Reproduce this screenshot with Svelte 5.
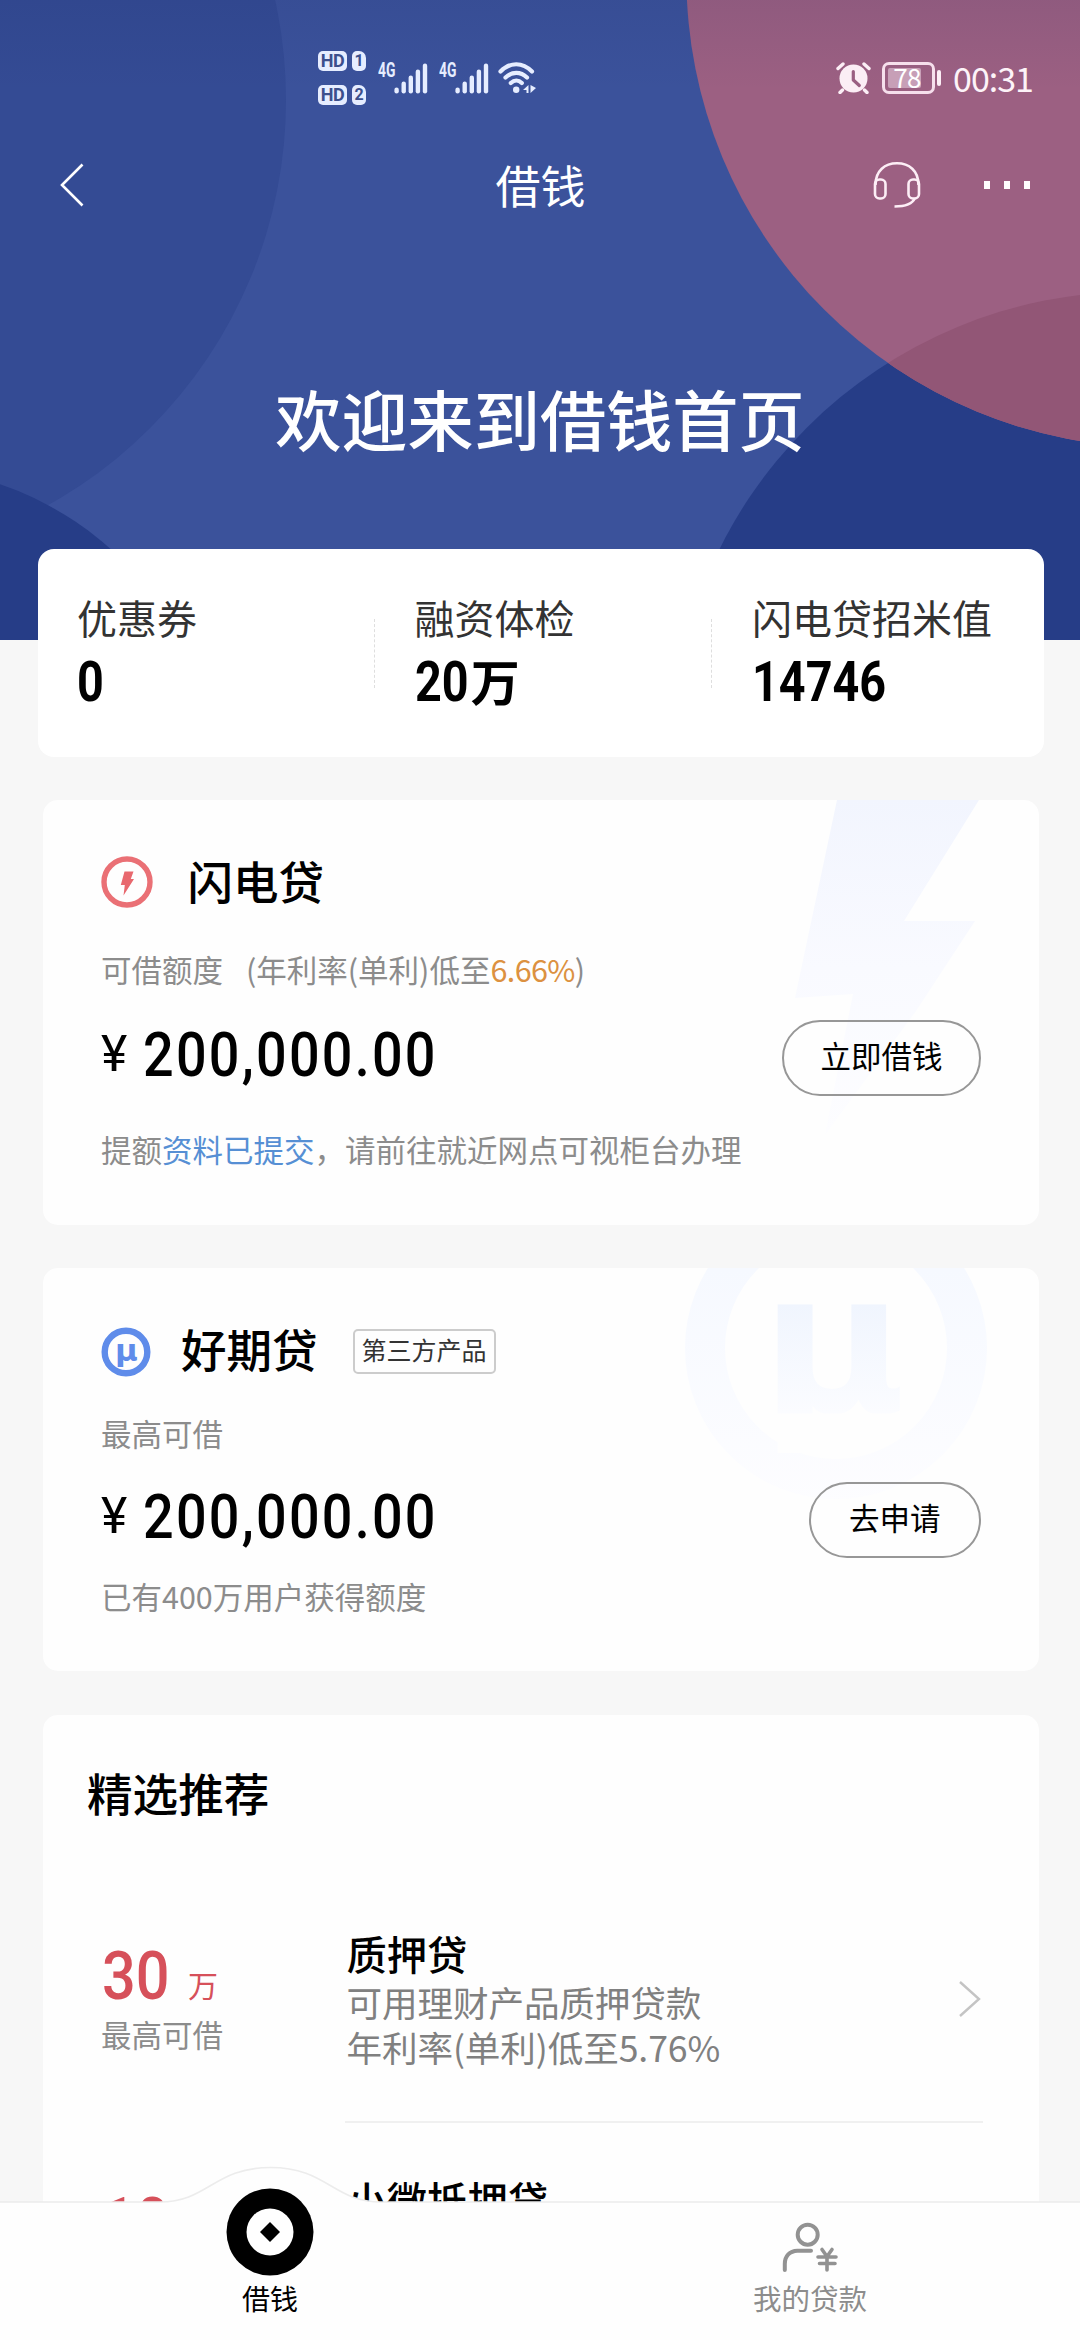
<script lang="ts">
	const stats = [
		{ label: '优惠券', num: '0', unit: '' },
		{ label: '融资体检', num: '20', unit: '万' },
		{ label: '闪电贷招米值', num: '14746', unit: '' }
	];

	const picks = [
		{ amount: '30', name: '质押贷', desc: '可用理财产品质押贷款', rate: '年利率(单利)低至5.76%' },
		{ amount: '10', name: '小微抵押贷', desc: '', rate: '' }
	];

	const bars = [6, 12, 18, 24, 30];
</script>

<div class="page">
	<header class="hero">
		<svg class="hero-bg" viewBox="0 0 1080 640">
			<defs>
				<linearGradient id="shade" x1="0" y1="0" x2="0" y2="1">
					<stop offset="0" stop-color="#12205a" stop-opacity="0.09" />
					<stop offset="1" stop-color="#12205a" stop-opacity="0" />
				</linearGradient>
				<clipPath id="pink"><circle cx="1156.6" cy="-22.9" r="470.2" /></clipPath>
			</defs>
			<rect width="1080" height="640" fill="#3b529b" />
			<circle cx="-178" cy="100" r="464" fill="#344b94" />
			<circle cx="-108" cy="796" r="330" fill="#263d87" />
			<circle cx="1135.3" cy="756.2" r="464.6" fill="#263d87" />
			<circle cx="1156.6" cy="-22.9" r="470.2" fill="#9c6082" />
			<circle cx="1135.3" cy="756.2" r="464.6" fill="#925676" clip-path="url(#pink)" />
			<rect width="1080" height="90" fill="url(#shade)" />
		</svg>

		<div class="status">
			<div class="status-left">
				<div class="sims">
					{#each [1, 2] as n}
						<div class="sim"><span class="hd">HD</span><span class="slot">{n}</span></div>
					{/each}
				</div>
				{#each [1, 2] as n}
					<div class="signal">
						<span class="net">4G</span>
						<svg width="34" height="31" viewBox="0 0 34 31">
							{#each bars as h, i}
								<rect x={i * 7.1 + 0.4} y={30.5 - h} width="4.4" height={h} rx="2.2" fill="#e6edff" />
							{/each}
						</svg>
					</div>
				{/each}
				<svg class="wifi" width="40" height="32" viewBox="0 0 40 32" fill="none" stroke="#e6edff" stroke-width="4.2" stroke-linecap="round">
					<path d="M2.5 9.5C12 -0.2 24.5 -0.2 34 9.5M7.5 15.5c6.5-6.2 15-6.2 21.5 0M12.8 21c3.5-3.3 7.7-3.3 11 0" />
					<circle cx="18.2" cy="27.8" r="3.2" fill="#e6edff" stroke="none" />
					<path d="M30.5 23v8h-2v-3h-3.5zM32.5 23l5.5 3-5.5 5z" fill="#e6edff" stroke="none" />
				</svg>
			</div>
			<div class="status-right">
				<svg width="35" height="32" viewBox="0 0 35 32">
					<circle cx="17.5" cy="16.5" r="14" fill="#fbeef5" />
					<path d="M6.5 28l-2.5 2.5M28.5 28l2.5 2.5M2 6.5l5-4.5M33 6.5l-5-4.5" stroke="#fbeef5" stroke-width="3.4" stroke-linecap="round" />
					<path d="M17.3 9.5v8.5l6 5.5" stroke="#9a5f82" stroke-width="3.2" fill="none" stroke-linecap="round" stroke-linejoin="round" />
				</svg>
				<div class="battery"><span class="charge"></span><span class="level">78</span></div>
				<span class="time">00:31</span>
			</div>
		</div>

		<nav class="nav">
			<svg class="back" width="24" height="44" viewBox="0 0 24 44" fill="none" stroke="#fff" stroke-width="2.6">
				<path d="M22.5 1.5L2 22l20.5 20.5" />
			</svg>
			<h1>借钱</h1>
			<div class="nav-right">
				<svg width="48" height="48" viewBox="0 0 48 48" fill="none" stroke="#fdeef6" stroke-width="2.6">
					<path d="M2.5 24C2.5 9.5 12 2.3 24 2.3S45.5 9.5 45.5 24" />
					<rect x="2" y="18.5" width="10.5" height="19" rx="4.5" />
					<rect x="35.5" y="18.5" width="10.5" height="19" rx="4.5" />
					<path d="M42 37c-2.5 5.5-8 8.5-20.5 8.5" />
				</svg>
				<div class="dots"><i></i><i></i><i></i></div>
			</div>
		</nav>

		<h2 class="welcome">欢迎来到借钱首页</h2>
	</header>

	<section class="stats">
		{#each stats as s}
			<div class="stat">
				<span class="stat-label">{s.label}</span>
				<span class="stat-value"><b class="din">{s.num}</b>{#if s.unit}<em>{s.unit}</em>{/if}</span>
			</div>
		{/each}
	</section>

	<section class="card flash">
		<svg class="mark" width="220" height="345" viewBox="0 0 220 345">
			<defs>
				<linearGradient id="bolt" x1="0" y1="0" x2="0" y2="1">
					<stop offset="0" stop-color="#f2f5fe" />
					<stop offset="0.5" stop-color="#f9faff" />
					<stop offset="1" stop-color="#fdfdff" />
				</linearGradient>
			</defs>
			<path d="M57 0H199L124 121H195L136 211L45 335L73 194L15 198Z" fill="url(#bolt)" />
		</svg>
		<div class="card-head">
			<svg class="logo" width="52" height="52" viewBox="0 0 52 52">
				<circle cx="26" cy="26" r="23" fill="none" stroke="#ea7075" stroke-width="5.4" />
				<path d="M23.5 15.5h9l-2.7 7.5h3.2L22.5 39.5l1.3-10.5h-4z" fill="#e8686e" />
			</svg>
			<h3>闪电贷</h3>
		</div>
		<p class="sub">可借额度<span class="gap"></span>(年利率(单利)低至<span class="orange">6.66%</span>)</p>
		<div class="amount-row">
			<span class="yen">¥</span><span class="din amount">200,000.00</span>
			<button>立即借钱</button>
		</div>
		<p class="note">提额<span class="blue">资料已提交</span>，请前往就近网点可视柜台办理</p>
	</section>

	<section class="card hao">
		<svg class="mark" width="310" height="240" viewBox="0 0 310 240">
			<defs>
				<linearGradient id="ring" x1="0" y1="0" x2="0" y2="240" gradientUnits="userSpaceOnUse">
					<stop offset="0" stop-color="#f6f9ff" />
					<stop offset="1" stop-color="#fdfdff" />
				</linearGradient>
				<linearGradient id="letter" x1="0" y1="36" x2="0" y2="146" gradientUnits="userSpaceOnUse">
					<stop offset="0" stop-color="#f0f5fe" />
					<stop offset="0.99" stop-color="#fbfcff" />
					<stop offset="1" stop-color="#fefefe" />
				</linearGradient>
			</defs>
			<circle cx="155" cy="80" r="131" fill="none" stroke="url(#ring)" stroke-width="40" />
			<text class="mu" x="80" y="144" font-size="197" fill="url(#letter)">µ</text>
		</svg>
		<div class="card-head">
			<svg class="logo" width="50" height="50" viewBox="0 0 50 50">
				<circle cx="25" cy="25" r="21.3" fill="none" stroke="#5f8cea" stroke-width="6.4" />
				<text class="mu" x="25.5" y="33.5" font-size="31" text-anchor="middle" fill="#5f8cea">µ</text>
			</svg>
			<h3>好期贷</h3>
			<span class="tag">第三方产品</span>
		</div>
		<p class="sub">最高可借</p>
		<div class="amount-row">
			<span class="yen">¥</span><span class="din amount">200,000.00</span>
			<button>去申请</button>
		</div>
		<p class="note">已有400万用户获得额度</p>
	</section>

	<section class="card picks">
		<h3>精选推荐</h3>
		{#each picks as p}
			<div class="pick">
				<div class="pick-left">
					<div class="pick-amount"><span class="din">{p.amount}</span>{#if p.rate}<small>万</small>{/if}</div>
					{#if p.rate}<span class="pick-cap">最高可借</span>{/if}
				</div>
				<div class="pick-body">
					<div class="pick-text">
						<h4>{p.name}</h4>
						<p>{p.desc}</p>
						<p>{p.rate}</p>
					</div>
					<svg width="24" height="38" viewBox="0 0 24 38" fill="none" stroke="#c4c4c4" stroke-width="2.4">
						<path d="M2 2l19 17L2 36" />
					</svg>
				</div>
			</div>
		{/each}
	</section>

	<footer class="tabbar">
		<svg class="tab-bg" width="1080" height="176" viewBox="0 0 1080 176">
			<path d="M0 38H160C208 38 214 3.5 270.5 3.5S333 38 381 38H1080V176H0Z" fill="#fefefe" />
			<path d="M0 38H160C208 38 214 3.5 270.5 3.5S333 38 381 38H1080" fill="none" stroke="#ececec" stroke-width="1.6" />
		</svg>
		<div class="tab active">
			<svg width="88" height="88" viewBox="0 0 88 88">
				<circle cx="44" cy="44" r="43.5" fill="#000" />
				<circle cx="44" cy="44" r="23.5" fill="#fff" />
				<path d="M44 34l10 10-10 10-10-10z" fill="#000" />
			</svg>
			<span>借钱</span>
		</div>
		<div class="tab">
			<svg width="56" height="50" viewBox="0 0 56 50" fill="none" stroke="#929292" stroke-width="4" stroke-linecap="round">
				<circle cx="25.7" cy="12.7" r="10" />
				<path d="M2.8 48v-6c0-8 5-13 12.5-13.3H29" />
				<path d="M40 27.5l5 7 5-7M45 34.5V48M36 35h18M37.5 41.5h15.5" stroke-width="3.6" />
			</svg>
			<span>我的贷款</span>
		</div>
	</footer>
</div>

<style>
	:global(body) { margin: 0; background: #f7f7f7; }
	h1, h2, h3, h4, p { margin: 0; font-weight: 400; }
	svg { display: block; flex: none; }

	.page {
		position: relative; width: 1080px; height: 2340px; overflow: hidden;
		background: #f7f7f7; color: #000;
		font-family: 'Noto Sans CJK SC', sans-serif;
	}
	.din { font-family: Roboto, sans-serif; font-weight: 500; display: inline-block; transform-origin: 0 50%; }
	.mu { font-family: 'DejaVu Sans', sans-serif; font-weight: 700; }

	/* Hero */
	.hero { position: relative; height: 640px; color: #fff; }
	.hero-bg { position: absolute; inset: 0; width: 1080px; height: 640px; }
	.hero > :not(.hero-bg) { position: relative; }

	.status { display: flex; justify-content: space-between; align-items: center; height: 156px; padding: 0 47px 0 318px; box-sizing: border-box; }
	.status-left, .status-right { display: flex; align-items: center; }
	.sims { display: flex; flex-direction: column; gap: 14px; margin-right: 12px; }
	.sim { display: flex; gap: 5px; }
	.hd, .slot {
		height: 20px; line-height: 20px; border-radius: 5px; text-align: center;
		background: #e6edff; color: #3c4f8c; font-family: Roboto, sans-serif; font-weight: 700; font-size: 18px;
	}
	.hd { width: 29px; letter-spacing: -0.5px; }
	.slot { width: 14px; border-top-right-radius: 7px; font-size: 16px; }
	.signal { display: flex; align-items: flex-start; width: 61px; }
	.net { width: 16px; margin-top: -3px; font: 700 21px/21px Roboto, sans-serif; color: #e6edff; transform: scaleX(0.66); transform-origin: 0 50%; }
	.wifi { margin-left: -2px; }

	.battery {
		position: relative; display: flex; align-items: center; justify-content: center;
		width: 53px; height: 32px; margin: 0 18px 0 11px; box-sizing: border-box;
		border: 3px solid #f6dfec; border-radius: 7px;
	}
	.battery::after { content: ''; position: absolute; right: -9px; top: 5px; width: 4px; height: 16px; border-radius: 2px; background: #fdeef6; }
	.charge { position: absolute; left: 3px; top: 3px; bottom: 3px; width: 33px; background: #c79fb7; border-radius: 2px; }
	.level { position: relative; font-size: 26px; line-height: 26px; margin-right: 3px; letter-spacing: -0.5px; margin-top: -2px; }
	.time { font-size: 34px; line-height: 34px; letter-spacing: -1px; color: #fdf3f8; }

	.nav { display: grid; grid-template-columns: 1fr auto 1fr; align-items: center; height: 58px; padding: 0 50px 0 51px; }
	.back { margin-left: 9px; }
	.nav h1 { font-size: 45px; line-height: 58px; }
	.nav-right { display: flex; align-items: center; justify-content: flex-end; gap: 63px; }
	.dots { display: flex; gap: 14px; }
	.dots i { width: 6px; height: 8px; background: #fff; }

	.welcome { margin-top: 163px; text-align: center; font-size: 66.2px; line-height: 80px; font-weight: 500; }

	/* Stats */
	.stats {
		position: relative; display: flex; width: 1006px; height: 208px; box-sizing: border-box;
		margin: -91px 0 0 38px; padding-top: 44px; background: #fff; border-radius: 16px;
	}
	.stat { flex: none; width: 337.5px; padding-left: 39px; box-sizing: border-box; white-space: nowrap; position: relative; }
	.stat + .stat::before { content: ''; position: absolute; left: -2px; top: 26px; height: 69px; border-left: 1.5px dashed #dedede; }
	.stat-label { display: block; font-size: 40px; line-height: 48px; color: #333; }
	.stat-value { display: flex; align-items: center; height: 50px; margin-top: 16px; }
	.stat-value .din { font-size: 55px; font-weight: 700; line-height: 50px; transform: scaleX(0.85); margin-right: -7px; }
	.stat-value em { font-style: normal; font-weight: 700; font-size: 49px; line-height: 50px; margin-top: -4px; }

	/* Product cards */
	.card { position: relative; width: 996px; margin: 43px 0 0 43px; box-sizing: border-box; background: #fefefe; border-radius: 15px; overflow: hidden; }
	.card > :not(.mark) { position: relative; }
	.mark { position: absolute; top: 0; }
	.flash { height: 425px; padding: 54px 58px 0; }
	.flash .mark { left: 737px; }
	.hao { height: 403px; padding: 56px 58px 0; }
	.hao .mark { left: 638px; }

	.card-head { display: flex; align-items: center; height: 56px; }
	.card-head h3 { font-size: 45.5px; line-height: 56px; font-weight: 500; margin: -4px 0 0 34.5px; }
	.hao .card-head h3 { margin: -9px 0 0 30px; }
	.tag {
		margin: -2px 0 0 35px; width: 143px; height: 45px; box-sizing: border-box; text-align: center;
		border: 2px solid #ccc; border-radius: 5px; font-size: 25px; line-height: 37px; color: #333;
	}
	.sub, .note { font-size: 30.5px; line-height: 40px; color: #8c8c8c; white-space: nowrap; }
	.sub { margin-top: 39px; }
	.gap { display: inline-block; width: 23px; }
	.orange { color: #dc9140; letter-spacing: -0.6px; }
	.blue { color: #568fd4; }
	.amount-row { display: flex; align-items: center; height: 76px; margin-top: 31px; }
	.yen { width: 42px; margin-top: -9px; font-size: 50px; line-height: 60px; font-family: Roboto, sans-serif; }
	.amount { margin-top: -5px; font-size: 60.5px; line-height: 60px; letter-spacing: 2.5px; transform: scaleX(0.892); }
	button {
		margin-left: auto; padding: 0 36.5px 6px; height: 76px; box-sizing: border-box;
		border: 2px solid #979797; border-radius: 38px; background: none;
		font: 30.5px/1 'Noto Sans CJK SC', sans-serif; color: #000;
	}
	.flash .note { margin-top: 33px; }
	.hao .sub { margin-top: 33px; }
	.hao .amount-row { margin-top: 29px; }
	.hao button { padding: 0 38.5px 6px; }
	.hao .note { margin-top: 18px; }

	/* Recommendations */
	.picks { height: 800px; margin-top: 44px; }
	.picks h3 { padding: 49px 0 0 44px; font-size: 45.6px; line-height: 56px; font-weight: 500; }
	.pick { display: flex; height: 246px; padding-left: 58px; }
	.picks h3 + .pick { margin-top: 57px; }
	.pick-left { width: 244px; padding-top: 65px; box-sizing: border-box; }
	.pick-amount { display: flex; align-items: flex-end; height: 60px; color: #d6505a; }
	.pick-amount .din { font-size: 66px; line-height: 60px; transform: scaleX(0.9); margin: 0 0 -4.5px 1px; }
	.pick-amount small { font-size: 30px; line-height: 30px; margin: 0 0 3px 11px; }
	.pick-cap { display: block; margin-top: 12px; font-size: 30.5px; line-height: 40px; color: #8c8c8c; }
	.pick-body { display: flex; justify-content: space-between; align-items: center; width: 638px; border-bottom: 2px solid #f0f0f0; }
	.pick-body svg { margin: 0 1px 0 0; }
	.pick-text { padding: 0 0 2px 1.5px; }
	h4 { font-size: 40.3px; line-height: 52px; font-weight: 500; }
	.pick-text p { font-size: 35.6px; line-height: 45px; height: 45px; letter-spacing: -0.1px; color: #808080; white-space: nowrap; }

	/* Tab bar */
	.tabbar { position: absolute; left: 0; bottom: 0; display: flex; width: 1080px; height: 176px; }
	.tab-bg { position: absolute; inset: 0; }
	.tab { position: relative; flex: 1; display: flex; flex-direction: column; align-items: center; justify-content: flex-end; padding-bottom: 22px; font-size: 28.5px; line-height: 40px; color: #8c8c8c; }
	.tab svg { margin-bottom: 6px; }
	.tab.active { color: #000; font-size: 28px; }
	.tab.active svg { margin-bottom: 2px; }
</style>
